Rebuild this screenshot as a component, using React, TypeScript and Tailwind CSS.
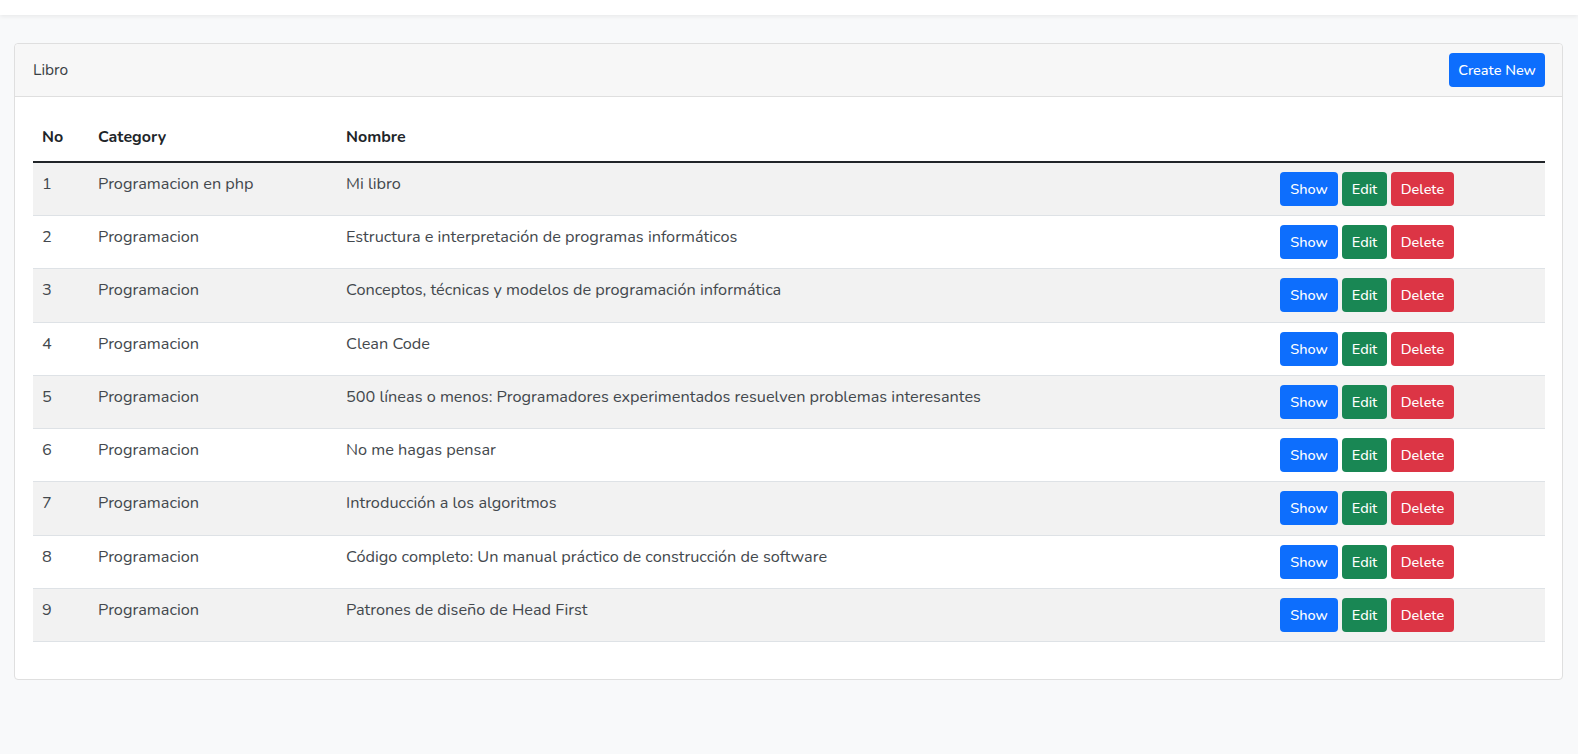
import React from 'react';

const libros = [
  { id: 1, category: 'Programacion en php', nombre: 'Mi libro' },
  { id: 2, category: 'Programacion', nombre: 'Estructura e interpretación de programas informáticos' },
  { id: 3, category: 'Programacion', nombre: 'Conceptos, técnicas y modelos de programación informática' },
  { id: 4, category: 'Programacion', nombre: 'Clean Code' },
  { id: 5, category: 'Programacion', nombre: '500 líneas o menos: Programadores experimentados resuelven problemas interesantes' },
  { id: 6, category: 'Programacion', nombre: 'No me hagas pensar' },
  { id: 7, category: 'Programacion', nombre: 'Introducción a los algoritmos' },
  { id: 8, category: 'Programacion', nombre: 'Código completo: Un manual práctico de construcción de software' },
  { id: 9, category: 'Programacion', nombre: 'Patrones de diseño de Head First' },
];

export default function App() {
  return (
    <div className="min-h-[754px] bg-[#f8f9fa] text-[#212529] font-['Nunito','Open_Sans',sans-serif] text-[16px] leading-[24px]">
      {/* navbar (scrolled off) */}
      <div className="h-[15px] bg-white shadow-[0_2px_4px_rgba(0,0,0,0.06)]"></div>

      <div className="pt-[28px] pl-[14px] pr-[15px]">
        <div className="bg-white border border-[#dfdfdf] rounded-[4px]">
          <div className="h-[53px] flex items-center justify-between pl-[18px] pr-[17px] bg-[#f7f7f7] border-b border-[#dfdfdf] rounded-t-[4px]">
            <span className="text-[15.5px] text-[#3a3f44]">Libro</span>
            <button className="h-[34px] w-[96px] rounded-[4px] bg-[#0d6efd] text-white text-[14.5px] font-medium">
              Create New
            </button>
          </div>

          <div className="pt-[16px] pb-[37px] pl-[18px] pr-[17px]">
            <table className="w-full border-collapse table-fixed">
              <thead>
                <tr className="h-[49px] border-b-2 border-[#212529] text-left">
                  <th className="w-[57px] px-[9px] font-bold">No</th>
                  <th className="w-[248px] px-[8px] font-bold">Category</th>
                  <th className="px-[8px] font-bold">Nombre</th>
                  <th className="w-[273px]"></th>
                </tr>
              </thead>
              <tbody className="text-[16.3px] text-[#43484d]">
                {libros.map((l, i) => (
                  <tr key={l.id} className={`h-[53.3px] border-b border-[#dee2e6] ${i % 2 === 0 ? 'bg-[#f2f2f2]' : 'bg-white'}`}>
                    <td className="px-[9px] pt-[9px] align-top">{l.id}</td>
                    <td className="px-[8px] pt-[9px] align-top">{l.category}</td>
                    <td className="px-[8px] pt-[9px] align-top">{l.nombre}</td>
                    <td className="px-[8px] py-[9px] align-top">
                      <div className="flex gap-[4px] text-[14.5px] font-medium text-white">
                        <button className="h-[34px] w-[58px] rounded-[4px] bg-[#0d6efd]">Show</button>
                        <button className="h-[34px] w-[45px] rounded-[4px] bg-[#198754]">Edit</button>
                        <button className="h-[34px] w-[63px] rounded-[4px] bg-[#dc3545]">Delete</button>
                      </div>
                    </td>
                  </tr>
                ))}
              </tbody>
            </table>
          </div>
        </div>
      </div>
    </div>
  );
}
